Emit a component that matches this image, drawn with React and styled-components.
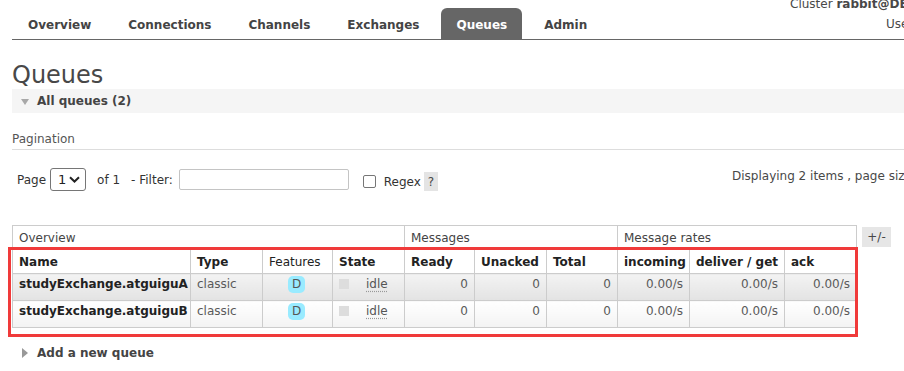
import React from "react";
import styled, { createGlobalStyle } from "styled-components";

const GlobalStyle = createGlobalStyle`
	html,
	body {
		margin: 0;
		padding: 0;
		background: #fff;
		overflow: hidden;
	}

	body {
		font-family: "DejaVu Sans", Verdana, sans-serif;
		font-size: 12px;
		color: #484848;
	}
`;

const TABS = ["Overview", "Connections", "Channels", "Exchanges", "Queues", "Admin"];

const COLUMNS = [
	{ key: "name", label: "Name", width: 178 },
	{ key: "type", label: "Type", width: 72 },
	{ key: "features", label: "Features", width: 70, plain: true },
	{ key: "state", label: "State", width: 72 },
	{ key: "ready", label: "Ready", width: 70, num: true },
	{ key: "unacked", label: "Unacked", width: 72, num: true },
	{ key: "total", label: "Total", width: 71, num: true },
	{ key: "incoming", label: "incoming", width: 72, num: true },
	{ key: "deliver", label: "deliver / get", width: 95, num: true },
	{ key: "ack", label: "ack", width: 72, num: true },
];

const GROUPS = [
	{ label: "Overview", span: 4 },
	{ label: "Messages", span: 3 },
	{ label: "Message rates", span: 3 },
];

const QUEUES = [
	{ name: "studyExchange.atguiguA", type: "classic", ready: 0, unacked: 0, total: 0, incoming: "0.00/s", deliver: "0.00/s", ack: "0.00/s" },
	{ name: "studyExchange.atguiguB", type: "classic", ready: 0, unacked: 0, total: 0, incoming: "0.00/s", deliver: "0.00/s", ack: "0.00/s" },
];

const App = () => {
	return (
		<Page>
			<GlobalStyle />
			<Header>
				<TabList>
					{TABS.map((tab) => (
						<Tab key={tab} $active={tab === "Queues"}>
							{tab}
						</Tab>
					))}
				</TabList>
				<LoginInfo>
					<InfoLine>
						Cluster <b>rabbit@DESKTOP-8F2K1QH</b>
					</InfoLine>
					<InfoLine $indent>
						User <b>guest</b> Log out
					</InfoLine>
				</LoginInfo>
			</Header>

			<Title>Queues</Title>

			<SectionHeader $open>
				<Arrow $open />
				All queues (2)
			</SectionHeader>

			<SubHeading>Pagination</SubHeading>
			<PaginationRow>
				<Label>Page</Label>
				<SelectBox>
					1
					<svg width="11" height="7" viewBox="0 0 11 7">
						<path d="M1 1.2 L5.5 5.5 L10 1.2" fill="none" stroke="#222" strokeWidth="2" />
					</svg>
				</SelectBox>
				<Label $gap={11}>of 1</Label>
				<Label $gap={11}>- Filter:</Label>
				<FilterInput type="text" />
				<RegexGroup>
					<CheckBox type="checkbox" />
					<Label $gap={8}>Regex</Label>
					<HelpBox>?</HelpBox>
				</RegexGroup>
				<DisplayInfo>Displaying 2 items , page size up to:</DisplayInfo>
			</PaginationRow>

			<TableArea>
				<QueueTable>
					<colgroup>
						{COLUMNS.map((col) => (
							<Col key={col.key} $width={col.width} />
						))}
					</colgroup>
					<thead>
						<tr>
							{GROUPS.map((g) => (
								<GroupCell key={g.label} colSpan={g.span}>
									{g.label}
								</GroupCell>
							))}
						</tr>
						<tr>
							{COLUMNS.map((col) => (
								<HeadCell key={col.key} $plain={col.plain}>
									{col.label}
								</HeadCell>
							))}
						</tr>
					</thead>
					<tbody>
						{QUEUES.map((q, i) => (
							<DataRow key={q.name} $alt={i % 2 === 0}>
								<NameCell>{q.name}</NameCell>
								<Cell>{q.type}</Cell>
								<Cell $center>
									<FeatureBadge title="durable: true">D</FeatureBadge>
								</Cell>
								<Cell>
									<StateSquare />
									<StateText title="Idle since 2023-01-01">idle</StateText>
								</Cell>
								<Cell $num>{q.ready}</Cell>
								<Cell $num>{q.unacked}</Cell>
								<Cell $num>{q.total}</Cell>
								<Cell $num>{q.incoming}</Cell>
								<Cell $num>{q.deliver}</Cell>
								<Cell $num>{q.ack}</Cell>
							</DataRow>
						))}
					</tbody>
				</QueueTable>
				<ToggleColumns>+/-</ToggleColumns>
				<Highlight />
			</TableArea>

			<SectionHeader>
				<Arrow />
				Add a new queue
			</SectionHeader>
		</Page>
	);
};

const Page = styled.div`
	width: 998px;
	padding-left: 12px;
`;

const Header = styled.div`
	display: flex;
	height: 39px;
	border-bottom: 1px solid #666;
`;

const TabList = styled.ul`
	display: flex;
	gap: 7px;
	list-style: none;
	margin: 0;
	padding: 0 0 0 1px;
	align-self: flex-end;
`;

const Tab = styled.li`
	box-sizing: border-box;
	padding: 3px 15px 0;
	height: 31px;
	line-height: 28px;
	font-weight: bold;
	color: ${(p) => (p.$active ? "#fff" : "#444")};
	background: ${(p) => (p.$active ? "#666" : "transparent")};
	border-radius: 6px 6px 0 0;
	white-space: nowrap;
`;

const LoginInfo = styled.div`
	margin-left: auto;
	margin-top: -6px;
	width: 220px;
	overflow: hidden;
	line-height: 20px;
	white-space: nowrap;
	color: #484848;
`;

const InfoLine = styled.div`
	padding-left: ${(p) => (p.$indent ? "96px" : "0")};
`;

const Title = styled.h1`
	margin: 21px 0 0;
	font-size: 24px;
	line-height: 28px;
	font-weight: normal;
	color: #484848;
`;

const SectionHeader = styled.h2`
	display: flex;
	align-items: center;
	gap: ${(p) => (p.$open ? "8px" : "9px")};
	margin: ${(p) => (p.$open ? "0" : "13px 0 0")};
	padding-left: ${(p) => (p.$open ? "9px" : "10px")};
	height: 24px;
	font-size: 12px;
	font-weight: bold;
	color: #444;
	background: ${(p) => (p.$open ? "#f5f5f5" : "transparent")};
`;

const Arrow = styled.span`
	width: 0;
	height: 0;
	border-style: solid;
	border-color: transparent;
	${(p) =>
		p.$open
			? `
		border-width: 6px 4px 0 4px;
		border-top-color: #a8a8a8;
		margin-top: 1px;
	`
			: `
		border-width: 5px 0 5px 6px;
		border-left-color: #999;
	`}
`;

const SubHeading = styled.h3`
	margin: 18px 0 0;
	padding-bottom: 2px;
	font-size: 12px;
	line-height: 16px;
	font-weight: normal;
	color: #555;
	border-bottom: 1px solid #ddd;
`;

const PaginationRow = styled.div`
	display: flex;
	align-items: center;
	height: 23px;
	margin-top: 18px;
	padding-left: 5px;
`;

const Label = styled.span`
	margin-left: ${(p) => (p.$gap ? `${p.$gap}px` : "0")};
	white-space: nowrap;
	color: #333;
`;

const SelectBox = styled.div`
	display: flex;
	align-items: center;
	justify-content: space-between;
	box-sizing: border-box;
	width: 36px;
	height: 23px;
	margin-left: 4px;
	padding: 0 5px 0 7px;
	border: 1px solid #767676;
	border-radius: 3px;
	color: #222;
	font-size: 13px;
`;

const FilterInput = styled.input`
	box-sizing: border-box;
	width: 170px;
	height: 21px;
	margin: 0 0 0 6px;
	border: 1px solid #c4c4c4;
	border-radius: 2px;
	outline: none;
`;

const RegexGroup = styled.div`
	display: flex;
	align-items: center;
	margin-top: 4px;
`;

const CheckBox = styled.input`
	appearance: none;
	box-sizing: border-box;
	width: 13px;
	height: 13px;
	margin: 0 0 0 14px;
	border: 1px solid #767676;
	border-radius: 2px;
	background: #fff;
`;

const HelpBox = styled.span`
	display: flex;
	align-items: center;
	justify-content: center;
	width: 14px;
	height: 19px;
	margin-left: 3px;
	background: #e4e4e4;
	color: #484848;
`;

const DisplayInfo = styled.span`
	align-self: flex-start;
	margin-left: auto;
	width: 278px;
	line-height: 16px;
	white-space: nowrap;
	overflow: hidden;
	color: #484848;
`;

const TableArea = styled.div`
	position: relative;
	display: flex;
	align-items: flex-start;
	margin-top: 34px;
`;

const QueueTable = styled.table`
	width: 844px;
	table-layout: fixed;
	border-collapse: collapse;
	font-size: 12px;
	line-height: 15px;
`;

const Col = styled.col`
	width: ${(p) => p.$width}px;
`;

const GroupCell = styled.th`
	padding: 5px 6px 3px;
	border: 1px solid #ccc;
	text-align: left;
	font-weight: normal;
	color: #444;
	background: #fff;
`;

const HeadCell = styled.th`
	padding: 5px 6px 3px;
	border: 1px solid #ccc;
	text-align: left;
	white-space: nowrap;
	font-weight: ${(p) => (p.$plain ? "normal" : "bold")};
	color: #222;
	background: #fff;
`;

const DataRow = styled.tr`
	td {
		background: ${(p) =>
			p.$alt
				? "linear-gradient(to bottom, #f3f3f3, #e3e3e3)"
				: "linear-gradient(to bottom, #ffffff, #f3f3f3)"};
	}
`;

const Cell = styled.td`
	padding: 3px 6px 8px;
	border: 1px solid #ccc;
	vertical-align: top;
	white-space: nowrap;
	color: #5a5a5a;
	text-align: ${(p) => (p.$num ? "right" : p.$center ? "center" : "left")};
`;

const NameCell = styled(Cell)`
	font-weight: bold;
	color: #222;
`;

const FeatureBadge = styled.abbr`
	display: inline-block;
	height: 17px;
	line-height: 17px;
	margin: -1px 0 -1px -2px;
	padding: 0 4px;
	border-radius: 5px;
	background: #99ebff;
	color: #555;
	text-decoration: none;
	vertical-align: top;
`;

const StateSquare = styled.span`
	display: inline-block;
	width: 10px;
	height: 10px;
	margin: 2px 17px 0 0;
	background: #ddd;
	vertical-align: top;
`;

const StateText = styled.abbr`
	color: #555;
	text-decoration: underline dotted #999;
	text-underline-offset: 3px;
`;

const ToggleColumns = styled.span`
	display: flex;
	align-items: center;
	justify-content: center;
	width: 29px;
	height: 20px;
	margin: 2px 0 0 5px;
	background: #e6e6e6;
	color: #484848;
`;

const Highlight = styled.div`
	position: absolute;
	left: -4px;
	top: 22px;
	width: 850px;
	height: 90px;
	box-sizing: border-box;
	border: 3px solid #f03a3a;
	pointer-events: none;
`;

export default App;
